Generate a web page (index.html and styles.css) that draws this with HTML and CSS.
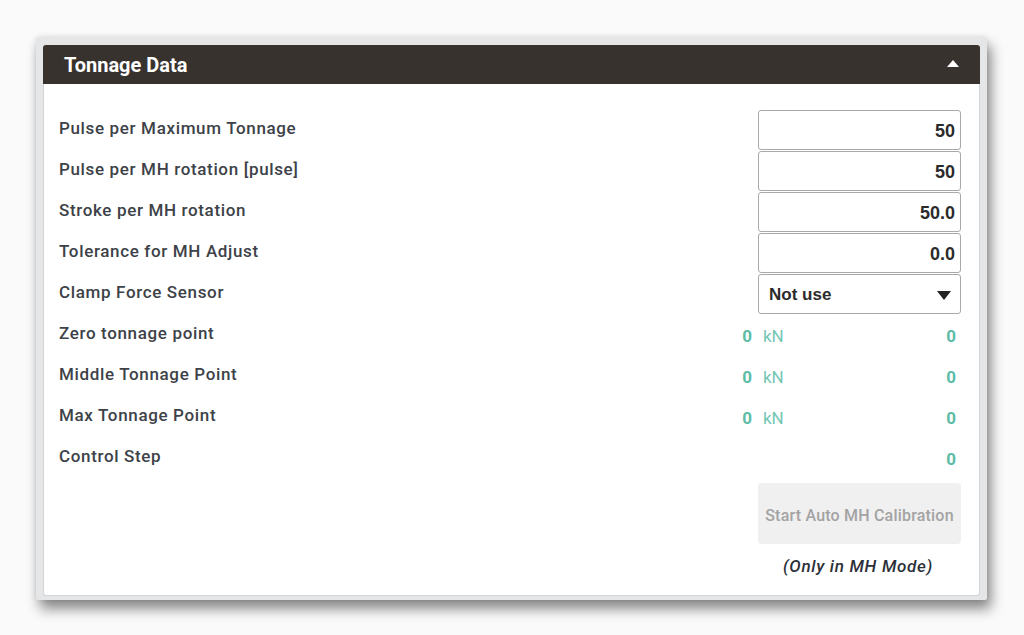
FILE: index.html
```html
<!DOCTYPE html>
<html>
<head>
<meta charset="utf-8">
<link rel="stylesheet" href="styles.css">
</head>
<body>
<div class="frame">
  <div class="card">
    <div class="card-head">
      <span class="title">Tonnage Data</span>
      <svg class="caret" width="12" height="7" viewBox="0 0 12 7"><path d="M6 0 L12 7 L0 7 Z" fill="#fff"/></svg>
    </div>
    <div class="card-body">
      <div class="row">
        <span class="label">Pulse per Maximum Tonnage</span>
        <div class="field">50</div>
      </div>
      <div class="row">
        <span class="label">Pulse per MH rotation [pulse]</span>
        <div class="field">50</div>
      </div>
      <div class="row">
        <span class="label">Stroke per MH rotation</span>
        <div class="field">50.0</div>
      </div>
      <div class="row">
        <span class="label">Tolerance for MH Adjust</span>
        <div class="field">0.0</div>
      </div>
      <div class="row">
        <span class="label">Clamp Force Sensor</span>
        <div class="field select"><span>Not use</span><svg width="14" height="9" viewBox="0 0 14 9"><path d="M0 0 L14 0 L7 9 Z" fill="#222"/></svg></div>
      </div>
      <div class="row">
        <span class="label">Zero tonnage point</span>
        <span class="num">0</span>
        <div class="meas"><span class="unit">kN</span><span class="num">0</span></div>
      </div>
      <div class="row">
        <span class="label">Middle Tonnage Point</span>
        <span class="num">0</span>
        <div class="meas"><span class="unit">kN</span><span class="num">0</span></div>
      </div>
      <div class="row">
        <span class="label">Max Tonnage Point</span>
        <span class="num">0</span>
        <div class="meas"><span class="unit">kN</span><span class="num">0</span></div>
      </div>
      <div class="row">
        <span class="label">Control Step</span>
        <span></span>
        <div class="meas"><span></span><span class="num">0</span></div>
      </div>
      <div class="actions">
        <button class="calib" disabled>Start Auto MH Calibration</button>
        <span class="note">(Only in MH Mode)</span>
      </div>
    </div>
  </div>
</div>
</body>
</html>
```

FILE: styles.css
```css
html, body {
  margin: 0;
  padding: 0;
  background: #fafafa;
}
body {
  padding: 37px 0 40px 36px;
  font-family: Roboto, "Liberation Sans", sans-serif;
}
.frame {
  width: 951px;
  height: 563px;
  box-sizing: border-box;
  padding: 8px 7px 4px 7px;
  background: #e5e6e7;
  border-radius: 2px;
  box-shadow: 4px 9px 13px rgba(0, 0, 0, 0.45), 0 0 6px rgba(0, 0, 0, 0.1);
}
.card {
  height: 100%;
  box-sizing: border-box;
  background: #fff;
  border: 1px solid #d4d4d4;
  border-top: none;
  border-radius: 3px;
  display: flex;
  flex-direction: column;
}
.card-head {
  height: 39px;
  background: #38322f;
  border-radius: 3px 3px 0 0;
  margin: 0 -1px;
  display: flex;
  align-items: center;
  justify-content: space-between;
  padding: 0 21px 0 21px;
  color: #fff;
}
.title {
  font-size: 20px;
  font-weight: 700;
}
.caret {
  margin-top: -2px;
}
.card-body {
  padding: 26px 18px 0 15px;
  display: flex;
  flex-direction: column;
}
.row {
  display: grid;
  grid-template-columns: 1fr 46px 203px;
  height: 41px;
}
.label {
  grid-column: 1;
  padding-top: 8px;
  line-height: 20px;
  font-size: 17px;
  letter-spacing: 0.65px;
  font-weight: 500;
  color: #3d4248;
}
.field {
  grid-column: 3;
  height: 40px;
  box-sizing: border-box;
  border: 1px solid #a9a9a9;
  border-radius: 3px;
  display: flex;
  align-items: center;
  justify-content: flex-end;
  padding: 2px 5px 0 10px;
  font-family: "Liberation Sans", Arial, sans-serif;
  font-size: 18px;
  font-weight: 700;
  color: #2b2b2b;
}
.field.select {
  justify-content: space-between;
  padding-right: 9px;
  font-size: 17px;
}
.num {
  font-size: 17px;
  font-weight: 700;
  color: #5cbca6;
  text-align: right;
  padding-right: 6px;
  align-self: center;
}
.meas {
  grid-column: 3;
  display: flex;
  justify-content: space-between;
  align-items: center;
}
.meas .num {
  padding: 0 5px 0 0;
}
.unit {
  font-size: 17px;
  color: #74c6b3;
  padding-left: 5px;
}
.actions {
  margin-top: 4px;
  align-self: flex-end;
  width: 203px;
  display: flex;
  flex-direction: column;
  align-items: center;
}
.calib {
  width: 203px;
  height: 61px;
  border: none;
  border-radius: 4px;
  background: #f0f0f0;
  font-family: Roboto, "Liberation Sans", sans-serif;
  font-size: 16px;
  letter-spacing: 0.2px;
  font-weight: 500;
  color: #a3a3a3;
  padding: 3px 0 0 0;
}
.note {
  margin-top: 12px;
  font-size: 17px;
  letter-spacing: 0.7px;
  font-style: italic;
  font-weight: 500;
  color: #2c3038;
  padding-right: 3px;
}
```
